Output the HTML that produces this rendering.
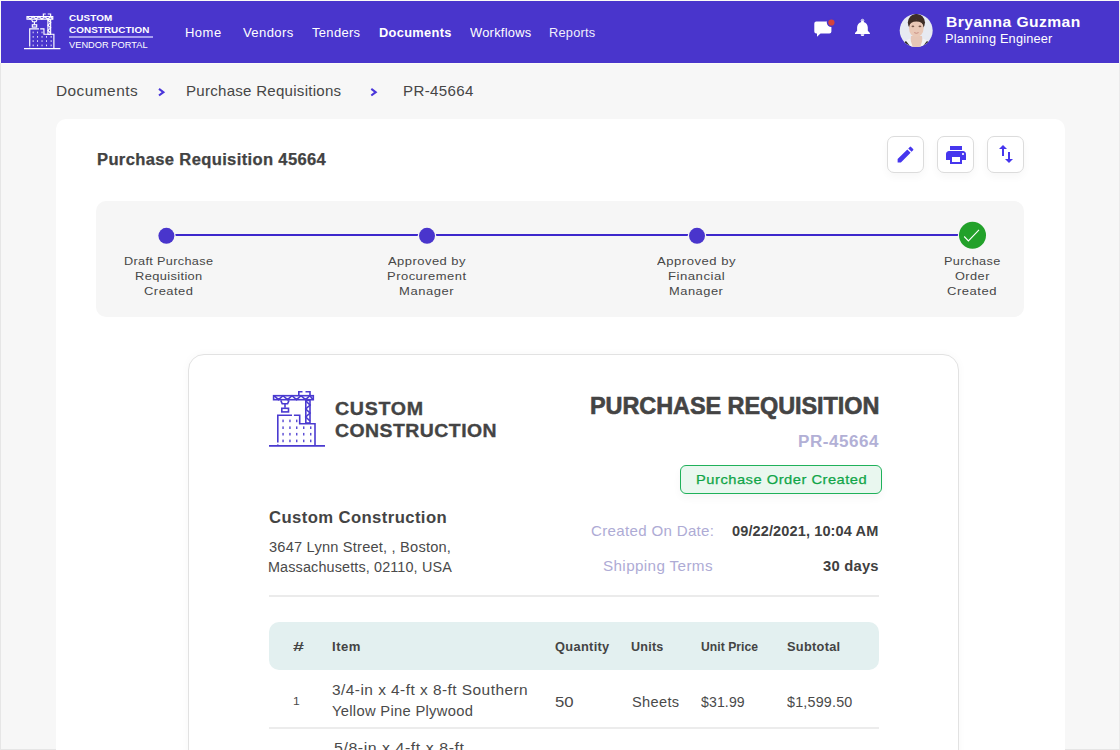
<!DOCTYPE html>
<html><head><meta charset="utf-8">
<style>
html,body{margin:0;padding:0;}
body{width:1120px;height:750px;position:relative;overflow:hidden;background:#f7f7f7;font-family:"Liberation Sans",sans-serif;}
.t{position:absolute;white-space:nowrap;line-height:1;transform-origin:0 0;font-family:"Liberation Sans",sans-serif;}
.a{position:absolute;box-sizing:border-box;}
svg{position:absolute;overflow:visible;}
</style></head><body>
<!-- frame -->
<div class="a" style="left:0;top:0;width:1120px;height:63px;background:#fbfbf6"></div>
<div class="a" style="left:0;top:63px;width:1px;height:687px;background:#e6e6e6"></div>
<div class="a" style="left:1119px;top:0;width:1px;height:750px;background:#ebebeb"></div>
<div class="a" style="left:0;top:749px;width:1120px;height:1px;background:#e6e6e6"></div>
<!-- header -->
<div class="a" style="left:1px;top:1px;width:1118px;height:62px;background:#4935cc"></div>
<div class="a" style="left:1px;top:63px;width:1118px;height:1px;background:#fcfcf8"></div>
<svg style="left:24px;top:13.2px" width="36.4" height="36.4" viewBox="0 0 56 56">
 <g fill="none" stroke="#fff" stroke-width="1.8">
  <g transform="translate(0,0.8)"><rect x="4.6" y="4.7" width="39.7" height="4"/>
  <polyline points="5,4.7 9.5,8.7 14,4.7 18.5,8.7 23,4.7 27.5,8.7 32,4.7 36.5,8.7 41,4.7 44,8.7"/>
  <path d="M29.8,4.7V0.7H33.5M36.5,0.7H41V4.7"/>
  <path d="M11.8,9.4L13.2,12.7H18.6L20,9.4M16,12.7V16.8"/>
  <rect x="12.8" y="17.3" width="6.7" height="3.6"/>
  <rect x="36.8" y="9.4" width="4.2" height="22.6"/>
  <polyline points="36.8,10 41,14 36.8,18 41,22 36.8,26 41,30"/></g>
  <path d="M8.8,54.9V53.6M8.8,51.6V24.3H23M24.9,24.3H30.7V32.7H46V54.9M0,54.9H56"/>
 </g>
 <g fill="#fff" id="win">
  <rect x="13.4" y="28.6" width="1.3" height="2.6"/><rect x="20.3" y="28.6" width="1.3" height="2.6"/><rect x="27.1" y="28.6" width="1.3" height="2.6"/>
  <rect x="13.4" y="35.4" width="1.3" height="2.6"/><rect x="20.3" y="35.4" width="1.3" height="2.6"/><rect x="27.1" y="35.4" width="1.3" height="2.6"/><rect x="34.1" y="35.4" width="1.3" height="2.6"/><rect x="41.1" y="35.4" width="1.3" height="2.6"/>
  <rect x="13.4" y="41.9" width="1.3" height="2.6"/><rect x="20.3" y="41.9" width="1.3" height="2.6"/><rect x="27.1" y="41.9" width="1.3" height="2.6"/><rect x="34.1" y="41.9" width="1.3" height="2.6"/><rect x="41.1" y="41.9" width="1.3" height="2.6"/>
  <rect x="13.4" y="48.6" width="1.3" height="2.6"/><rect x="20.3" y="48.6" width="1.3" height="2.6"/><rect x="27.1" y="48.6" width="1.3" height="2.6"/><rect x="34.1" y="48.6" width="1.3" height="2.6"/><rect x="41.1" y="48.6" width="1.3" height="2.6"/>
 </g>
</svg>
<div class="a" style="left:69px;top:36px;width:84px;height:2px;background:#a79ef0"></div>
<!-- chat icon -->
<svg style="left:0;top:0" width="1120" height="63">
 <path d="M816.3,21.4H829.4Q831.4,21.4 831.4,23.4V31.6Q831.4,33.6 829.4,33.6H820.5L817,36.8V33.6H816.3Q814.3,33.6 814.3,31.6V23.4Q814.3,21.4 816.3,21.4Z" fill="#fff"/>
 <circle cx="831.4" cy="22.5" r="4.6" fill="#4935cc"/>
 <circle cx="831.4" cy="22.5" r="3.1" fill="#d5433c"/>
 <!-- bell -->
 <path d="M862.5,20.2a1.1,1.1 0 0 1 1.1,1.1v0.6c2.6,0.6 4.2,2.8 4.2,5.6v3.2l2.1,2.3v1H855v-1l2.1-2.3v-3.2c0-2.8 1.6-5 4.3-5.6v-0.6a1.1,1.1 0 0 1 1.1-1.1z" fill="#fff"/>
 <path d="M860.6,34.2h3.8a1.9,1.9 0 0 1-3.8,0z" fill="#fff"/>
 <circle cx="862.5" cy="20.6" r="1.3" fill="none" stroke="#fff" stroke-width="0.9"/>
 <!-- avatar -->
 <defs><clipPath id="av"><circle cx="916.2" cy="30.5" r="16.5"/></clipPath></defs>
 <g clip-path="url(#av)">
  <rect x="899" y="13" width="35" height="35" fill="#e7eaf1"/>
  <path d="M911,36 L922,36 L923,48 L910,48Z" fill="#e6c6b6"/>
  <path d="M901,48 Q903,41 910,38.5 L913,48Z" fill="#f3f3f3"/>
  <path d="M932,48 Q930,41 923,38.5 L920,48Z" fill="#f3f3f3"/>
  <path d="M900,48 Q902,43 906,41 L910,46 L909,48Z" fill="#2a2a2a"/>
  <path d="M933,48 Q931,43 927,41 L923,46 L924,48Z" fill="#2a2a2a"/>
  <ellipse cx="916.4" cy="22.5" rx="8.6" ry="8.6" fill="#3e2d26"/>
  <ellipse cx="916.3" cy="28.3" rx="7.3" ry="8.6" fill="#e9c8b6"/>
  <path d="M908.8,26 Q909.5,19.5 916.4,19.2 Q923.3,19.5 924,26 Q922.5,21.8 916.4,21.6 Q910.3,21.8 908.8,26Z" fill="#3e2d26"/>
  <ellipse cx="912.9" cy="26.4" rx="1.4" ry="0.8" fill="#7a5a4e"/>
  <ellipse cx="919.9" cy="26.4" rx="1.4" ry="0.8" fill="#7a5a4e"/>
  <path d="M914.2,32.6 Q916.4,34 918.6,32.6" stroke="#c4877c" stroke-width="0.9" fill="none"/>
 </g>
</svg>
<!-- breadcrumb chevrons -->
<svg style="left:0;top:0" width="1120" height="120">
 <path d="M159,88.9L163.4,92.2L159,95.5" fill="none" stroke="#4a36da" stroke-width="2.1"/>
 <path d="M371.3,88.9L375.7,92.2L371.3,95.5" fill="none" stroke="#4a36da" stroke-width="2.1"/>
</svg>
<!-- main card -->
<div class="a" style="left:56px;top:119px;width:1009px;height:700px;background:#fff;border-radius:10px"></div>
<!-- action buttons -->
<div class="a" style="left:887px;top:136px;width:37px;height:37px;border:1px solid #dcdcdc;border-radius:7px;background:#fff;box-shadow:0 4px 8px rgba(0,0,0,0.035)"></div>
<div class="a" style="left:937px;top:136px;width:37px;height:37px;border:1px solid #dcdcdc;border-radius:7px;background:#fff;box-shadow:0 4px 8px rgba(0,0,0,0.035)"></div>
<div class="a" style="left:987px;top:136px;width:37px;height:37px;border:1px solid #dcdcdc;border-radius:7px;background:#fff;box-shadow:0 4px 8px rgba(0,0,0,0.035)"></div>
<svg style="left:895px;top:144px" width="21" height="21" viewBox="0 0 24 24"><path fill="#4636ee" d="M3 17.25V21h3.75L17.81 9.94l-3.75-3.75L3 17.25zM20.71 7.04a.996.996 0 0 0 0-1.41l-2.34-2.34a.996.996 0 0 0-1.41 0l-1.83 1.83 3.75 3.75 1.83-1.83z"/></svg>
<svg style="left:944px;top:143px" width="24" height="24" viewBox="0 0 24 24"><path fill="#4636ee" d="M19 8H5c-1.66 0-3 1.34-3 3v6h4v4h12v-4h4v-6c0-1.660-1.34-3-3-3zm-3 11H8v-5h8v5zm3-7c-.55 0-1-.45-1-1s.45-1 1-1 1 .45 1 1-.45 1-1 1zm-1-9H6v4h12V3z"/></svg>
<svg style="left:994px;top:142px" width="24" height="24" viewBox="0 0 24 24"><path fill="#4636ee" d="M16 17.01V10h-2v7.01h-3L15 21l4-3.99h-3zM9 3L5 6.99h3V14h2V6.99h3L9 3z"/></svg>
<!-- stepper -->
<div class="a" style="left:96px;top:201px;width:928px;height:116px;background:#f6f6f6;border-radius:10px"></div>
<svg style="left:0;top:0" width="1120" height="330">
 <rect x="170" y="234" width="792" height="2" fill="#3d28cc"/>
 <circle cx="166.4" cy="235.8" r="9.3" fill="#f6f6f6"/>
 <circle cx="427" cy="235.8" r="9.3" fill="#f6f6f6"/>
 <circle cx="697" cy="235.8" r="9.3" fill="#f6f6f6"/>
 <circle cx="972.5" cy="235.3" r="14.6" fill="#f6f6f6"/>
 <circle cx="166.4" cy="235.8" r="8" fill="#4935cc"/>
 <circle cx="427" cy="235.8" r="8" fill="#4935cc"/>
 <circle cx="697" cy="235.8" r="8" fill="#4935cc"/>
 <circle cx="972.5" cy="235.3" r="13.5" fill="#22a12a"/>
 <path d="M964.2,236.5L968.4,240.9L979,229.9" fill="none" stroke="#fff" stroke-width="1.1"/>
</svg>
<!-- document card -->
<div class="a" style="left:188px;top:354px;width:771px;height:500px;background:#fff;border:1px solid #e2e2e2;border-radius:16px;box-shadow:0 0 10px rgba(0,0,0,0.03)"></div>
<svg style="left:269.3px;top:391.3px" width="56" height="56" viewBox="0 0 56 56">
 <g fill="none" stroke="#4a3ad0" stroke-width="1.6">
  <rect x="4.6" y="4.7" width="39.7" height="4"/>
  <polyline points="5,4.7 9.5,8.7 14,4.7 18.5,8.7 23,4.7 27.5,8.7 32,4.7 36.5,8.7 41,4.7 44,8.7"/>
  <path d="M29.8,4.7V0.7H33.5M36.5,0.7H41V4.7"/>
  <path d="M11.8,9.4L13.2,12.7H18.6L20,9.4M16,12.7V16.8"/>
  <rect x="12.8" y="17.3" width="6.7" height="3.6"/>
  <rect x="36.8" y="9.4" width="4.2" height="22.6"/>
  <polyline points="36.8,10 41,14 36.8,18 41,22 36.8,26 41,30"/>
  <path d="M8.8,54.9V53.6M8.8,51.6V24.3H23M24.9,24.3H30.7V32.7H46V54.9M0,54.9H56"/>
 </g>
 <g fill="#4a3ad0">
  <rect x="13.4" y="28.6" width="1.3" height="2.6"/><rect x="20.3" y="28.6" width="1.3" height="2.6"/><rect x="27.1" y="28.6" width="1.3" height="2.6"/>
  <rect x="13.4" y="35.4" width="1.3" height="2.6"/><rect x="20.3" y="35.4" width="1.3" height="2.6"/><rect x="27.1" y="35.4" width="1.3" height="2.6"/><rect x="34.1" y="35.4" width="1.3" height="2.6"/><rect x="41.1" y="35.4" width="1.3" height="2.6"/>
  <rect x="13.4" y="41.9" width="1.3" height="2.6"/><rect x="20.3" y="41.9" width="1.3" height="2.6"/><rect x="27.1" y="41.9" width="1.3" height="2.6"/><rect x="34.1" y="41.9" width="1.3" height="2.6"/><rect x="41.1" y="41.9" width="1.3" height="2.6"/>
  <rect x="13.4" y="48.6" width="1.3" height="2.6"/><rect x="20.3" y="48.6" width="1.3" height="2.6"/><rect x="27.1" y="48.6" width="1.3" height="2.6"/><rect x="34.1" y="48.6" width="1.3" height="2.6"/><rect x="41.1" y="48.6" width="1.3" height="2.6"/>
 </g>
</svg>
<div class="a" style="left:680px;top:465px;width:202px;height:29px;border:1px solid #1fb15a;border-radius:6px;background:#e9f7ef;box-shadow:0 4px 8px rgba(0,0,0,0.04)"></div>
<div class="a" style="left:269px;top:595px;width:610px;height:2px;background:#ebebeb"></div>
<div class="a" style="left:269px;top:622px;width:610px;height:48px;background:#e3f0f0;border-radius:10px"></div>
<div class="a" style="left:269px;top:727px;width:610px;height:2px;background:#ececec"></div>
<span class="t" style="left:69.00px;top:12.65px;font-size:9.7px;font-weight:700;color:#ffffff;letter-spacing:0.115px;transform:scaleX(1.0211);">CUSTOM</span>
<span class="t" style="left:69.00px;top:24.65px;font-size:9.7px;font-weight:700;color:#ffffff;letter-spacing:0.081px;transform:scaleX(1.0174);">CONSTRUCTION</span>
<span class="t" style="left:69.00px;top:41.40px;font-size:9.2px;font-weight:400;color:#ffffff;letter-spacing:0.028px;transform:scaleX(1.0065);">VENDOR PORTAL</span>
<span class="t" style="left:184.53px;top:26.90px;font-size:12.2px;font-weight:400;color:#ffffff;letter-spacing:0.446px;transform:scaleX(1.0675);">Home</span>
<span class="t" style="left:243.20px;top:26.90px;font-size:12.2px;font-weight:400;color:#ffffff;letter-spacing:0.340px;transform:scaleX(1.0736);">Vendors</span>
<span class="t" style="left:312.10px;top:26.90px;font-size:12.2px;font-weight:400;color:#ffffff;letter-spacing:0.296px;transform:scaleX(1.0657);">Tenders</span>
<span class="t" style="left:378.70px;top:26.90px;font-size:12.2px;font-weight:700;color:#ffffff;letter-spacing:0.285px;transform:scaleX(1.0542);">Documents</span>
<span class="t" style="left:469.60px;top:26.90px;font-size:12.2px;font-weight:400;color:#ffffff;letter-spacing:0.247px;transform:scaleX(1.0560);">Workflows</span>
<span class="t" style="left:548.95px;top:26.90px;font-size:12.2px;font-weight:400;color:#f0eefc;letter-spacing:0.217px;transform:scaleX(1.0493);">Reports</span>
<span class="t" style="left:946.30px;top:14.70px;font-size:14.6px;font-weight:700;color:#ffffff;letter-spacing:0.410px;transform:scaleX(1.0714);">Bryanna Guzman</span>
<span class="t" style="left:945.25px;top:32.90px;font-size:12.2px;font-weight:400;color:#ffffff;letter-spacing:0.183px;transform:scaleX(1.0466);">Planning Engineer</span>
<span class="t" style="left:55.52px;top:83.85px;font-size:14.3px;font-weight:400;color:#464646;letter-spacing:0.429px;transform:scaleX(1.0779);">Documents</span>
<span class="t" style="left:186.45px;top:83.85px;font-size:14.3px;font-weight:400;color:#464646;letter-spacing:0.243px;transform:scaleX(1.0544);">Purchase Requisitions</span>
<span class="t" style="left:402.54px;top:83.85px;font-size:14.3px;font-weight:400;color:#464646;letter-spacing:0.318px;transform:scaleX(1.0556);">PR-45664</span>
<span class="t" style="left:97.44px;top:151.70px;font-size:15.6px;font-weight:700;color:#424242;letter-spacing:0.326px;transform:scaleX(1.0629);-webkit-text-stroke:0.25px #424242">Purchase Requisition 45664</span>
<span class="t" style="left:124.30px;top:254.65px;font-size:11.7px;font-weight:400;color:#474747;letter-spacing:0.311px;transform:scaleX(1.0848);">Draft Purchase</span>
<span class="t" style="left:134.70px;top:269.65px;font-size:11.7px;font-weight:400;color:#474747;letter-spacing:0.342px;transform:scaleX(1.0982);">Requisition</span>
<span class="t" style="left:144.30px;top:284.65px;font-size:11.7px;font-weight:400;color:#474747;letter-spacing:0.441px;transform:scaleX(1.1069);">Created</span>
<span class="t" style="left:387.85px;top:254.65px;font-size:11.7px;font-weight:400;color:#474747;letter-spacing:0.430px;transform:scaleX(1.1087);">Approved by</span>
<span class="t" style="left:387.45px;top:269.65px;font-size:11.7px;font-weight:400;color:#474747;letter-spacing:0.443px;transform:scaleX(1.1090);">Procurement</span>
<span class="t" style="left:398.90px;top:284.65px;font-size:11.7px;font-weight:400;color:#474747;letter-spacing:0.514px;transform:scaleX(1.1111);">Manager</span>
<span class="t" style="left:657.45px;top:254.65px;font-size:11.7px;font-weight:400;color:#474747;letter-spacing:0.461px;transform:scaleX(1.1174);">Approved by</span>
<span class="t" style="left:668.30px;top:269.65px;font-size:11.7px;font-weight:400;color:#474747;letter-spacing:0.436px;transform:scaleX(1.1276);">Financial</span>
<span class="t" style="left:669.30px;top:284.65px;font-size:11.7px;font-weight:400;color:#474747;letter-spacing:0.470px;transform:scaleX(1.1008);">Manager</span>
<span class="t" style="left:944.20px;top:254.65px;font-size:11.7px;font-weight:400;color:#474747;letter-spacing:0.365px;transform:scaleX(1.0850);">Purchase</span>
<span class="t" style="left:955.40px;top:269.65px;font-size:11.7px;font-weight:400;color:#474747;letter-spacing:0.414px;transform:scaleX(1.0904);">Order</span>
<span class="t" style="left:947.30px;top:284.65px;font-size:11.7px;font-weight:400;color:#474747;letter-spacing:0.473px;transform:scaleX(1.1157);">Created</span>
<span class="t" style="left:335.10px;top:400.30px;font-size:18.4px;font-weight:700;color:#444444;letter-spacing:0.657px;transform:scaleX(1.0665);-webkit-text-stroke:0.35px #444">CUSTOM</span>
<span class="t" style="left:335.10px;top:422.30px;font-size:18.4px;font-weight:700;color:#444444;letter-spacing:0.463px;transform:scaleX(1.0545);-webkit-text-stroke:0.35px #444">CONSTRUCTION</span>
<span class="t" style="left:590.11px;top:395.20px;font-size:23.6px;font-weight:700;color:#444444;letter-spacing:-0.063px;transform:scaleX(0.9938);-webkit-text-stroke:0.6px #444">PURCHASE REQUISITION</span>
<span class="t" style="left:797.62px;top:433.60px;font-size:15.8px;font-weight:700;color:#b2b0d6;letter-spacing:0.495px;transform:scaleX(1.0798);">PR-45664</span>
<span class="t" style="left:696.19px;top:472.90px;font-size:13.2px;font-weight:400;color:#10a548;letter-spacing:0.460px;transform:scaleX(1.1133);-webkit-text-stroke:0.25px #10a548">Purchase Order Created</span>
<span class="t" style="left:268.50px;top:509.70px;font-size:15.6px;font-weight:700;color:#444444;letter-spacing:0.379px;transform:scaleX(1.0689);">Custom Construction</span>
<span class="t" style="left:268.50px;top:540.00px;font-size:14.0px;font-weight:400;color:#4a4a4a;letter-spacing:0.187px;transform:scaleX(1.0454);">3647 Lynn Street, , Boston,</span>
<span class="t" style="left:268.47px;top:560.00px;font-size:14.0px;font-weight:400;color:#4a4a4a;letter-spacing:0.132px;transform:scaleX(1.0278);">Massachusetts, 02110, USA</span>
<span class="t" style="left:590.90px;top:523.90px;font-size:14.2px;font-weight:400;color:#aeabd5;letter-spacing:0.294px;transform:scaleX(1.0639);">Created On Date:</span>
<span class="t" style="left:732.30px;top:523.90px;font-size:14.2px;font-weight:700;color:#3f3f3f;letter-spacing:0.116px;transform:scaleX(1.0241);">09/22/2021, 10:04 AM</span>
<span class="t" style="left:603.20px;top:558.90px;font-size:14.2px;font-weight:400;color:#aeabd5;letter-spacing:0.344px;transform:scaleX(1.0738);">Shipping Terms</span>
<span class="t" style="left:823.40px;top:558.90px;font-size:14.2px;font-weight:700;color:#3f3f3f;letter-spacing:0.226px;transform:scaleX(1.0406);">30 days</span>
<span class="t" style="left:293.40px;top:641.00px;font-size:12.0px;font-weight:700;color:#444444;letter-spacing:0.000px;transform:scaleX(1.6429);">#</span>
<span class="t" style="left:332.30px;top:641.00px;font-size:12.0px;font-weight:700;color:#444444;letter-spacing:0.451px;transform:scaleX(1.0924);">Item</span>
<span class="t" style="left:554.70px;top:641.00px;font-size:12.0px;font-weight:700;color:#444444;letter-spacing:0.300px;transform:scaleX(1.0687);">Quantity</span>
<span class="t" style="left:630.80px;top:641.00px;font-size:12.0px;font-weight:700;color:#444444;letter-spacing:0.227px;transform:scaleX(1.0470);">Units</span>
<span class="t" style="left:701.30px;top:641.00px;font-size:12.0px;font-weight:700;color:#444444;letter-spacing:0.047px;transform:scaleX(1.0113);">Unit Price</span>
<span class="t" style="left:787.30px;top:641.00px;font-size:12.0px;font-weight:700;color:#444444;letter-spacing:0.276px;transform:scaleX(1.0647);">Subtotal</span>
<span class="t" style="left:292.70px;top:695.50px;font-size:11.0px;font-weight:400;color:#4a4a4a;letter-spacing:0.000px;transform:scaleX(1.1000);">1</span>
<span class="t" style="left:332.30px;top:683.60px;font-size:13.8px;font-weight:400;color:#4a4a4a;letter-spacing:0.412px;transform:scaleX(1.1189);">3/4-in x 4-ft x 8-ft Southern</span>
<span class="t" style="left:332.30px;top:704.60px;font-size:13.8px;font-weight:400;color:#4a4a4a;letter-spacing:0.293px;transform:scaleX(1.0669);">Yellow Pine Plywood</span>
<span class="t" style="left:554.70px;top:695.60px;font-size:13.8px;font-weight:400;color:#4a4a4a;letter-spacing:0.000px;transform:scaleX(1.2123);">50</span>
<span class="t" style="left:632.30px;top:695.60px;font-size:13.8px;font-weight:400;color:#4a4a4a;letter-spacing:0.313px;transform:scaleX(1.0578);">Sheets</span>
<span class="t" style="left:701.10px;top:695.60px;font-size:13.8px;font-weight:400;color:#4a4a4a;letter-spacing:0.116px;transform:scaleX(1.0208);">$31.99</span>
<span class="t" style="left:786.80px;top:695.60px;font-size:13.8px;font-weight:400;color:#4a4a4a;letter-spacing:0.188px;transform:scaleX(1.0379);">$1,599.50</span>
<span class="t" style="left:333.50px;top:741.60px;font-size:13.8px;font-weight:400;color:#4a4a4a;letter-spacing:0.482px;transform:scaleX(1.1529);">5/8-in x 4-ft x 8-ft</span>
</body></html>
